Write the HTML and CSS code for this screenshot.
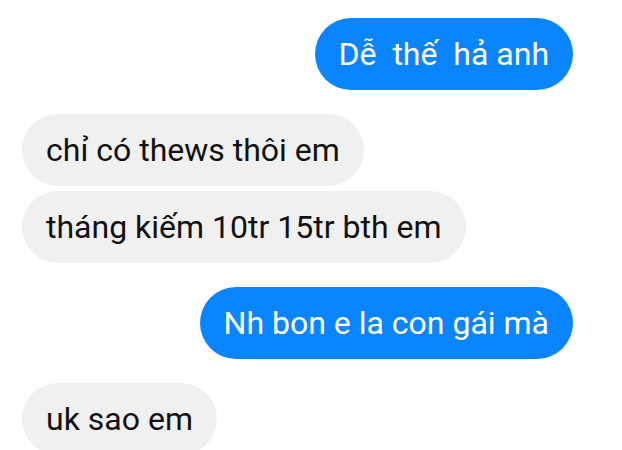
FILE: index.html
```html
<!DOCTYPE html>
<html lang="vi">
<head>
<meta charset="utf-8">
<link rel="stylesheet" href="styles.css">
</head>
<body>
<div class="chat">
  <div class="msg out first"><span class="bubble">Dễ&nbsp; thế&nbsp; hả anh</span></div>
  <div class="msg in group"><span class="bubble">chỉ có thews thôi em</span></div>
  <div class="msg in tight"><span class="bubble">tháng kiếm 10tr 15tr bth em</span></div>
  <div class="msg out group"><span class="bubble">Nh bon e la con gái mà</span></div>
  <div class="msg in group"><span class="bubble">uk sao em</span></div>
</div>
</body>
</html>
```
FILE: styles.css
```css
html, body {
  margin: 0;
  padding: 0;
  background: #ffffff;
  width: 622px;
  height: 450px;
  overflow: hidden;
}
.chat {
  display: flex;
  flex-direction: column;
  padding-top: 18px;
  font-family: Roboto, "Noto Sans", sans-serif;
  font-size: 32px;
}
.msg {
  display: flex;
}
.msg.group { margin-top: 24px; }
.msg.tight { margin-top: 5px; }
.msg.out { justify-content: flex-end; padding-right: 49px; }
.msg.in { justify-content: flex-start; padding-left: 22px; }
.bubble {
  display: flex;
  align-items: center;
  height: 72px;
  padding: 0 24px;
  border-radius: 36px;
  box-sizing: border-box;
  white-space: nowrap;
}
.out .bubble {
  background: #0a84ff;
  color: #ffffff;
}
.in .bubble {
  background: #f0f0f0;
  color: #111111;
}
```
